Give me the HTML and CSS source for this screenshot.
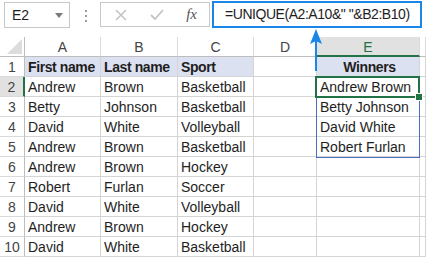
FILE: index.html
```html
<!DOCTYPE html>
<html lang="en">
    <head>
        <meta charset="UTF-8" />
        <meta name="viewport" content="width=device-width, initial-scale=1.0" />
        <title>UNIQUE across two columns</title>
        <link rel="stylesheet" href="styles.css">
    </head>
    <body>
        <div class="toolbar">
            <div class="name-box">
                <span>E2</span>
                <svg class="caret" width="8" height="5" viewBox="0 0 8 5"><path d="M0 0 H8 L4 5 Z" fill="#7a7a7a" /></svg>
            </div>
            <div class="grip">
                <span></span><span></span><span></span>
            </div>
            <div class="fx-buttons">
                <svg width="12" height="12" viewBox="0 0 12 12">
                    <path d="M1 1 L11 11 M11 1 L1 11" stroke="#c4c4c4" stroke-width="1.6" fill="none" />
                </svg>
                <svg width="14" height="11" viewBox="0 0 14 11">
                    <path d="M1 6 L5 10 L13 1" stroke="#c4c4c4" stroke-width="1.8" fill="none" />
                </svg>
                <span class="fx">fx</span>
            </div>
            <div class="formula">=UNIQUE(A2:A10&amp;" "&amp;B2:B10)</div>
        </div>

        <div class="sheet">
            <div class="corner"><svg width="15" height="15" viewBox="0 0 15 15"><path d="M15 0 V15 H0 Z" fill="#dcdcdc" /></svg></div>
            <div class="col-head">A</div>
            <div class="col-head">B</div>
            <div class="col-head">C</div>
            <div class="col-head">D</div>
            <div class="col-head active">E</div>
            <div class="col-head"></div>

            <div class="row-head">1</div>
            <div class="cell title">First name</div>
            <div class="cell title">Last name</div>
            <div class="cell title">Sport</div>
            <div class="cell"></div>
            <div class="cell title center">Winners</div>
            <div class="cell"></div>

            <div class="row-head active">2</div>
            <div class="cell">Andrew</div>
            <div class="cell">Brown</div>
            <div class="cell">Basketball</div>
            <div class="cell"></div>
            <div class="cell">Andrew Brown</div>
            <div class="cell"></div>

            <div class="row-head">3</div>
            <div class="cell">Betty</div>
            <div class="cell">Johnson</div>
            <div class="cell">Basketball</div>
            <div class="cell"></div>
            <div class="cell">Betty Johnson</div>
            <div class="cell"></div>

            <div class="row-head">4</div>
            <div class="cell">David</div>
            <div class="cell">White</div>
            <div class="cell">Volleyball</div>
            <div class="cell"></div>
            <div class="cell">David White</div>
            <div class="cell"></div>

            <div class="row-head">5</div>
            <div class="cell">Andrew</div>
            <div class="cell">Brown</div>
            <div class="cell">Basketball</div>
            <div class="cell"></div>
            <div class="cell">Robert Furlan</div>
            <div class="cell"></div>

            <div class="row-head">6</div>
            <div class="cell">Andrew</div>
            <div class="cell">Brown</div>
            <div class="cell">Hockey</div>
            <div class="cell"></div>
            <div class="cell"></div>
            <div class="cell"></div>

            <div class="row-head">7</div>
            <div class="cell">Robert</div>
            <div class="cell">Furlan</div>
            <div class="cell">Soccer</div>
            <div class="cell"></div>
            <div class="cell"></div>
            <div class="cell"></div>

            <div class="row-head">8</div>
            <div class="cell">David</div>
            <div class="cell">White</div>
            <div class="cell">Volleyball</div>
            <div class="cell"></div>
            <div class="cell"></div>
            <div class="cell"></div>

            <div class="row-head">9</div>
            <div class="cell">Andrew</div>
            <div class="cell">Brown</div>
            <div class="cell">Hockey</div>
            <div class="cell"></div>
            <div class="cell"></div>
            <div class="cell"></div>

            <div class="row-head">10</div>
            <div class="cell">David</div>
            <div class="cell">White</div>
            <div class="cell">Basketball</div>
            <div class="cell"></div>
            <div class="cell"></div>
            <div class="cell"></div>

            <!-- overlays: spill range, active cell, pointer arrow -->
            <div class="spill"></div>
            <div class="selection"><span class="handle"></span></div>
            <svg class="arrow" width="14" height="42" viewBox="0 0 14 42">
                <path d="M7 4 V42" stroke="#1a86e8" stroke-width="2" />
                <path d="M7 0 L13 15 L7 12 L1 15 Z" fill="#1a86e8" />
            </svg>
        </div>
    </body>
</html>
```

FILE: styles.css
```css
body {
    margin: 0;
    width: 426px;
    height: 258px;
    overflow: hidden;
    background: #fff;
    font-family: "Liberation Sans", Arial, sans-serif;
    font-size: 14px;
    color: #1e1e1e;
}

.toolbar {
    display: flex;
    align-items: flex-start;
    height: 37px;
    padding: 2px 0 0 4px;
    box-sizing: border-box;
}

.name-box {
    display: flex;
    align-items: center;
    justify-content: space-between;
    width: 66px;
    height: 26px;
    padding: 0 6px 0 7px;
    box-sizing: border-box;
    border: 1px solid #c8c8c8;
}

.grip {
    display: flex;
    flex-direction: column;
    gap: 3px;
    margin: 8px 0 0 15px;
}

.grip span {
    width: 2px;
    height: 2px;
    background: #9a9a9a;
}

.fx-buttons {
    display: flex;
    align-items: center;
    justify-content: space-between;
    width: 110px;
    height: 25px;
    margin-left: 13px;
    padding: 0 12px 0 14px;
    box-sizing: border-box;
    border: 1px solid #c8c8c8;
}

.fx {
    font-family: "Liberation Serif", serif;
    font-style: italic;
    font-size: 15px;
    color: #555;
}

.formula {
    width: 210px;
    height: 27px;
    margin: -1px 0 0 2px;
    padding-left: 11px;
    box-sizing: border-box;
    border: 2px solid #1a86e8;
    font-size: 14px;
    letter-spacing: -0.45px;
    line-height: 23px;
    white-space: nowrap;
}

.sheet {
    position: relative;
    display: grid;
    grid-template-columns: 25px 76px 77px 76px 63px 103px 1fr;
    grid-auto-rows: 20px;
}

.corner {
    display: flex;
    align-items: flex-end;
    justify-content: flex-end;
    padding: 0 2px 2px 0;
    border-right: 1px solid #bdbdbd;
    border-bottom: 1px solid #bdbdbd;
}

.col-head {
    text-align: center;
    line-height: 20px;
    color: #444;
    border-right: 1px solid #dadada;
    border-bottom: 1px solid #bdbdbd;
}

.col-head.active {
    background: #e1e1e1;
    color: #217346;
    border-bottom: 2px solid #217346;
}

.row-head {
    text-align: center;
    line-height: 20px;
    color: #444;
    border-right: 1px solid #bdbdbd;
    border-bottom: 1px solid #dadada;
}

.row-head.active {
    background: #e1e1e1;
    border-right: 2px solid #217346;
}

.cell {
    padding-left: 3px;
    line-height: 20px;
    white-space: nowrap;
    overflow: hidden;
    border-right: 1px solid #d4d4d4;
    border-bottom: 1px solid #d4d4d4;
}

.cell.title {
    background: #dce1f1;
    font-weight: bold;
    letter-spacing: -0.4px;
}

.cell.center {
    text-align: center;
}

.spill {
    position: absolute;
    left: 316px;
    top: 40px;
    width: 104px;
    height: 81px;
    box-sizing: border-box;
    border: 1px solid #4a6fc0;
}

.selection {
    position: absolute;
    left: 315px;
    top: 39px;
    width: 105px;
    height: 22px;
    box-sizing: border-box;
    border: 2px solid #217346;
}

.handle {
    position: absolute;
    right: -5px;
    bottom: -5px;
    width: 6px;
    height: 6px;
    background: #217346;
    border: 1px solid #fff;
}

.arrow {
    position: absolute;
    left: 309px;
    top: -8px;
}
```
